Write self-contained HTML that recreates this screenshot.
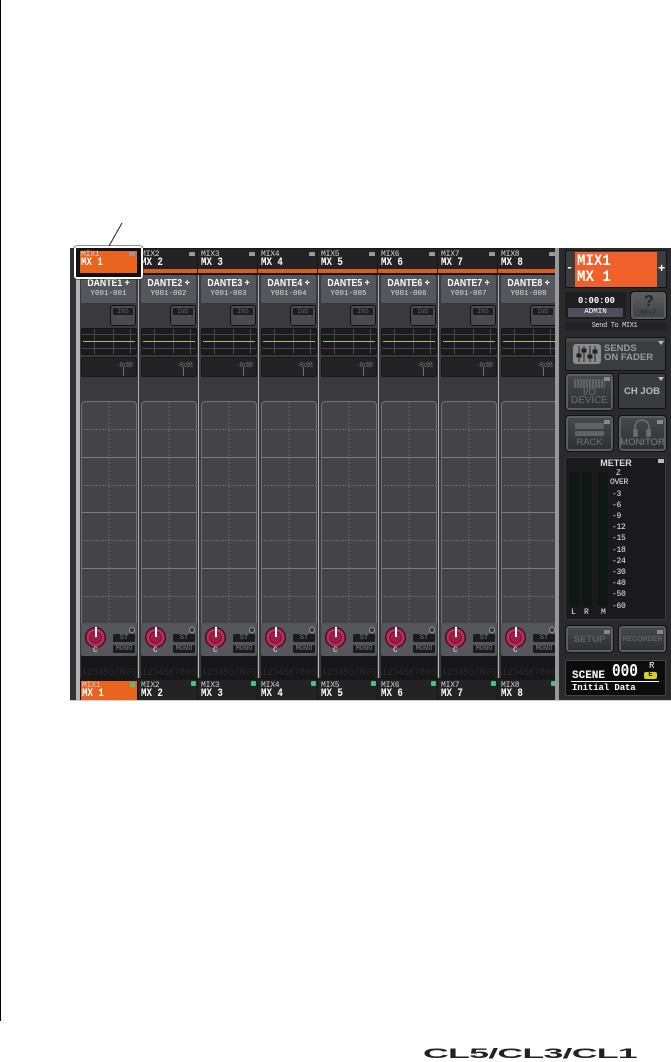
<!DOCTYPE html>
<html><head><meta charset="utf-8">
<style>
html,body{margin:0;padding:0;background:#fff}
body{width:671px;height:1061px;position:relative;overflow:hidden;font-family:"Liberation Sans",sans-serif}
div,span{position:absolute;box-sizing:border-box;white-space:nowrap}
.m{font-family:"Liberation Mono",monospace}
.s{top:0;left:0;width:60px;height:1061px}
.h{left:0;top:249px;width:59px;height:20px;background:#232325}
.o{left:0;top:269px;width:59px;height:4px;background:#d9601f}
.t1{left:3px;top:1px;font:8px/9px "Liberation Mono",monospace;color:#d5d5d5;letter-spacing:-.2px}
.t2{left:3px;top:8px;font:bold 11px/12px "Liberation Mono",monospace;color:#fff;transform-origin:0 0;transform:scaleX(.83)}
.w{left:51px;top:3px;width:6px;height:4px;background:#999;border-radius:1px 1px 0 0}
.sep{left:60px;top:275px;width:1px;height:403px;background:#b0b0b2}
.n{left:3px;top:275px;width:55px;height:28px;background:#55575c;border-radius:2px 2px 0 0;color:#fff;text-align:center}
.n1{left:0;width:55px;top:3px;font:bold 10px/11px "Liberation Sans",sans-serif;transform:scaleX(.87)}
.n2{left:0;width:55px;top:14px;font:7.5px/10px "Liberation Mono",monospace;color:#ddd}
.i{left:32px;top:305px;width:26px;height:21px;background:#4a4b4e;border:1px solid #111113;border-radius:3px}
.i span{left:2px;top:2px;width:20px;height:7px;background:#1e1e20;font:6.5px/7px "Liberation Mono",monospace;color:#666;text-align:center}
.e{left:3px;top:328px;width:56px;height:27px;border:1px solid #17171a;background:#1b1b1d;border-radius:2px}
.e i{position:absolute;left:0;width:54px;height:1px;background:#48484c}
.e u{position:absolute;top:0;width:1px;height:25px;background:#48484c}
.e b{position:absolute;left:1px;top:12px;width:52px;height:1px;background:#8fcf57}
.d{left:3px;top:357px;width:56px;height:20px;background:#232325;border:1px solid #17171a;border-radius:2px;color:#707072;font:7.5px/9px "Liberation Sans",sans-serif}
.d span{right:3px;top:2px}
.d i{position:absolute;left:41px;top:9px;width:1px;height:9px;background:#707072}
.g{left:3px;top:401px;width:56px;height:223px;background:#444448;border:1px solid #737377;border-bottom:0;border-radius:4px 4px 0 0}
.g svg{position:absolute;left:-1px;top:-1px}
.k{left:3px;top:623px;width:56px;height:33px;background:#55575c;border-radius:0 0 3px 3px}
.kn{left:4px;top:4px;width:21px;height:21px;border-radius:50%;background:radial-gradient(circle,#9c1f45 0 5px,#6d1530 5.5px 6px,#c42a58 6.5px 8.5px,#2a0a14 10px)}
.kn i{position:absolute;left:9.5px;top:0;width:2px;height:10px;background:#fff}
.c{left:12px;top:23px;font:8px/9px "Liberation Mono",monospace;color:#eee}
.st{left:32px;width:22px;height:8px;background:#1c1c1e;font:7px/8px "Liberation Mono",monospace;color:#7c7c7e;text-align:center;border-radius:1px}
.led{left:48px;top:4px;width:6px;height:6px;border-radius:50%;background:#333;border:1px solid #999}
.b{left:3px;top:656px;width:56px;height:22px;background:#17171a;font:9px/10px "Liberation Sans",sans-serif;color:#2b2b2d;text-align:center;letter-spacing:.4px}
.b span{left:1px;top:11px}
.f{left:0;top:680px;width:59px;height:20px;background:#232325}
.f .t1{left:3px;top:1px}
.f .t2{left:3px;top:8px}
.l{left:53px;top:1px;width:5px;height:5px;background:#4fbf7a;border-radius:1px}
.p{background:#3b3c3e;border:1px solid #121214;border-radius:2px}
.hw{background:linear-gradient(#47484a,#2f3032);border:2px solid #5c5d5f;outline:1px solid #111;border-radius:3px;color:#6a6b6d;text-align:center}
.mk{font:8px/9px "Liberation Mono",monospace;color:#eee;letter-spacing:-.3px}
</style></head><body>
<div style="left:0;top:0;width:1px;height:1021px;background:#000"></div>
<svg style="position:absolute;left:0;top:0" width="671" height="300"><line x1="122" y1="223" x2="109" y2="246" stroke="#222" stroke-width="1"/></svg>

<div style="left:70px;top:248px;width:601px;height:453px;background:#3a3a3e"></div>
<div style="left:70px;top:248px;width:6px;height:453px;background:#333336"></div>
<div style="left:76px;top:248px;width:4px;height:453px;background:#b4b2b6"></div>
<div style="left:80px;top:248px;width:478px;height:27px;background:#19191b"></div>
<div style="left:80px;top:678px;width:478px;height:23px;background:#19191b"></div>

<div class="s" style="left:78px"><div class="h"></div><div class="o"></div><div class="sep"></div>
<div class="n"><span class="n1">DANTE1 +</span><span class="n2">Y001-001</span></div><div class="i"><span>INS</span></div>
<div class="e"><i style="top:5px"></i><i style="top:19px"></i><u style="left:12px"></u><u style="left:31px"></u><u style="left:48px"></u><b></b></div><div class="d"><span>-8dB</span><i></i></div>
<div class="g"><svg width="56" height="223"><use href="#gr"/></svg></div>
<div class="k"><div class="kn"><i></i></div><span class="c">C</span><span class="st" style="top:11px">ST</span><span class="st" style="top:22px">MONO</span><span class="led"></span></div>
<div class="b"><span>123456789S</span></div>
<div class="f" style="left:3px;top:681px;width:56px;height:19px;background:#e8641f"><span class="t1" style="left:1px;top:0">MIX1</span><span class="t2" style="left:1px;top:7px">MX 1</span><span class="l" style="left:49px;top:1px"></span></div></div>

<div class="s" style="left:138px"><div class="h"><span class="t1">MIX2</span><span class="t2">MX 2</span><span class="w"></span></div><div class="o"></div><div class="sep"></div>
<div class="n"><span class="n1">DANTE2 +</span><span class="n2">Y001-002</span></div><div class="i"><span>INS</span></div>
<div class="e"><i style="top:5px"></i><i style="top:19px"></i><u style="left:12px"></u><u style="left:31px"></u><u style="left:48px"></u><b></b></div><div class="d"><span>-8dB</span><i></i></div>
<div class="g"><svg width="56" height="223"><use href="#gr"/></svg></div>
<div class="k"><div class="kn"><i></i></div><span class="c">C</span><span class="st" style="top:11px">ST</span><span class="st" style="top:22px">MONO</span><span class="led"></span></div>
<div class="b"><span>123456789S</span></div>
<div class="f"><span class="t1">MIX2</span><span class="t2">MX 2</span><span class="l"></span></div></div>

<div class="s" style="left:198px"><div class="h"><span class="t1">MIX3</span><span class="t2">MX 3</span><span class="w"></span></div><div class="o"></div><div class="sep"></div>
<div class="n"><span class="n1">DANTE3 +</span><span class="n2">Y001-003</span></div><div class="i"><span>INS</span></div>
<div class="e"><i style="top:5px"></i><i style="top:19px"></i><u style="left:12px"></u><u style="left:31px"></u><u style="left:48px"></u><b></b></div><div class="d"><span>-8dB</span><i></i></div>
<div class="g"><svg width="56" height="223"><use href="#gr"/></svg></div>
<div class="k"><div class="kn"><i></i></div><span class="c">C</span><span class="st" style="top:11px">ST</span><span class="st" style="top:22px">MONO</span><span class="led"></span></div>
<div class="b"><span>123456789S</span></div>
<div class="f"><span class="t1">MIX3</span><span class="t2">MX 3</span><span class="l"></span></div></div>

<div class="s" style="left:258px"><div class="h"><span class="t1">MIX4</span><span class="t2">MX 4</span><span class="w"></span></div><div class="o"></div><div class="sep"></div>
<div class="n"><span class="n1">DANTE4 +</span><span class="n2">Y001-004</span></div><div class="i"><span>INS</span></div>
<div class="e"><i style="top:5px"></i><i style="top:19px"></i><u style="left:12px"></u><u style="left:31px"></u><u style="left:48px"></u><b></b></div><div class="d"><span>-8dB</span><i></i></div>
<div class="g"><svg width="56" height="223"><use href="#gr"/></svg></div>
<div class="k"><div class="kn"><i></i></div><span class="c">C</span><span class="st" style="top:11px">ST</span><span class="st" style="top:22px">MONO</span><span class="led"></span></div>
<div class="b"><span>123456789S</span></div>
<div class="f"><span class="t1">MIX4</span><span class="t2">MX 4</span><span class="l"></span></div></div>

<div class="s" style="left:318px"><div class="h"><span class="t1">MIX5</span><span class="t2">MX 5</span><span class="w"></span></div><div class="o"></div><div class="sep"></div>
<div class="n"><span class="n1">DANTE5 +</span><span class="n2">Y001-005</span></div><div class="i"><span>INS</span></div>
<div class="e"><i style="top:5px"></i><i style="top:19px"></i><u style="left:12px"></u><u style="left:31px"></u><u style="left:48px"></u><b></b></div><div class="d"><span>-8dB</span><i></i></div>
<div class="g"><svg width="56" height="223"><use href="#gr"/></svg></div>
<div class="k"><div class="kn"><i></i></div><span class="c">C</span><span class="st" style="top:11px">ST</span><span class="st" style="top:22px">MONO</span><span class="led"></span></div>
<div class="b"><span>123456789S</span></div>
<div class="f"><span class="t1">MIX5</span><span class="t2">MX 5</span><span class="l"></span></div></div>

<div class="s" style="left:378px"><div class="h"><span class="t1">MIX6</span><span class="t2">MX 6</span><span class="w"></span></div><div class="o"></div><div class="sep"></div>
<div class="n"><span class="n1">DANTE6 +</span><span class="n2">Y001-006</span></div><div class="i"><span>INS</span></div>
<div class="e"><i style="top:5px"></i><i style="top:19px"></i><u style="left:12px"></u><u style="left:31px"></u><u style="left:48px"></u><b></b></div><div class="d"><span>-8dB</span><i></i></div>
<div class="g"><svg width="56" height="223"><use href="#gr"/></svg></div>
<div class="k"><div class="kn"><i></i></div><span class="c">C</span><span class="st" style="top:11px">ST</span><span class="st" style="top:22px">MONO</span><span class="led"></span></div>
<div class="b"><span>123456789S</span></div>
<div class="f"><span class="t1">MIX6</span><span class="t2">MX 6</span><span class="l"></span></div></div>

<div class="s" style="left:438px"><div class="h"><span class="t1">MIX7</span><span class="t2">MX 7</span><span class="w"></span></div><div class="o"></div><div class="sep"></div>
<div class="n"><span class="n1">DANTE7 +</span><span class="n2">Y001-007</span></div><div class="i"><span>INS</span></div>
<div class="e"><i style="top:5px"></i><i style="top:19px"></i><u style="left:12px"></u><u style="left:31px"></u><u style="left:48px"></u><b></b></div><div class="d"><span>-8dB</span><i></i></div>
<div class="g"><svg width="56" height="223"><use href="#gr"/></svg></div>
<div class="k"><div class="kn"><i></i></div><span class="c">C</span><span class="st" style="top:11px">ST</span><span class="st" style="top:22px">MONO</span><span class="led"></span></div>
<div class="b"><span>123456789S</span></div>
<div class="f"><span class="t1">MIX7</span><span class="t2">MX 7</span><span class="l"></span></div></div>

<div class="s" style="left:498px"><div class="h"><span class="t1">MIX8</span><span class="t2">MX 8</span><span class="w"></span></div><div class="o"></div>
<div class="n"><span class="n1">DANTE8 +</span><span class="n2">Y001-008</span></div><div class="i"><span>INS</span></div>
<div class="e"><i style="top:5px"></i><i style="top:19px"></i><u style="left:12px"></u><u style="left:31px"></u><u style="left:48px"></u><b></b></div><div class="d"><span>-8dB</span><i></i></div>
<div class="g"><svg width="56" height="223"><use href="#gr"/></svg></div>
<div class="k"><div class="kn"><i></i></div><span class="c">C</span><span class="st" style="top:11px">ST</span><span class="st" style="top:22px">MONO</span><span class="led"></span></div>
<div class="b"><span>123456789S</span></div>
<div class="f"><span class="t1">MIX8</span><span class="t2">MX 8</span><span class="l"></span></div></div>

<svg width="0" height="0" style="position:absolute"><defs><g id="gr" fill="none" stroke="#68686c">
<line x1="28" y1="1" x2="28" y2="223" stroke-dasharray="2 2"/>
<line x1="0" y1="28.5" x2="56" y2="28.5" stroke-dasharray="2 1"/>
<line x1="0" y1="56.5" x2="56" y2="56.5" stroke="#7e7e82"/>
<line x1="0" y1="84.5" x2="56" y2="84.5" stroke-dasharray="2 1"/>
<line x1="0" y1="111.5" x2="56" y2="111.5" stroke="#7e7e82"/>
<line x1="0" y1="139.5" x2="56" y2="139.5" stroke-dasharray="2 1"/>
<line x1="0" y1="167.5" x2="56" y2="167.5" stroke="#7e7e82"/>
<line x1="0" y1="195.5" x2="56" y2="195.5" stroke-dasharray="2 1"/>
</g></defs></svg>

<!-- selected outline -->
<div style="left:74px;top:246px;width:69px;height:33px;border:1px solid #fff;background:#111;border-radius:3px;box-shadow:0 0 0 .5px #222"></div>
<div style="left:75px;top:247px;width:67px;height:31px;border:1px solid #fff;border-radius:2px;outline:1px solid #111;outline-offset:-2px"></div>
<div style="left:80px;top:251px;width:57px;height:22px;background:#e8641f"></div>
<span class="t1" style="left:81px;top:250px">MIX1</span>
<span class="t2" style="left:81px;top:257px">MX 1</span>
<span class="w" style="left:129px;top:252px"></span>

<!-- right panel -->
<div style="left:555px;top:248px;width:4px;height:453px;background:#98989a"></div>
<div style="left:559px;top:248px;width:112px;height:453px;background:#2a2a2c"></div>

<div class="p" style="left:565px;top:250px;width:102px;height:38px;background:#3b3c3e"></div>
<div style="left:575px;top:252px;width:82px;height:35px;background:#f0602a"></div>
<span class="m" style="left:577px;top:253px;font-weight:bold;font-size:16px;line-height:16px;color:#fff;transform-origin:0 0;transform:scaleX(.88)">MIX1</span>
<span class="m" style="left:577px;top:269px;font-weight:bold;font-size:16px;line-height:16px;color:#fff;transform-origin:0 0;transform:scaleX(.88)">MX 1</span>
<span class="m" style="left:566px;top:262px;font-weight:bold;font-size:12px;line-height:12px;color:#fff">-</span>
<span class="m" style="left:658px;top:263px;font-weight:bold;font-size:12px;line-height:12px;color:#fff">+</span>

<div style="left:565px;top:292px;width:61px;height:27px;background:#1f1f21;border-radius:2px"></div>
<span class="m" style="left:578px;top:296px;font-weight:bold;font-size:8.8px;line-height:11px;color:#fff">0:00:00</span>
<div class="m" style="left:568px;top:308px;width:55px;height:9px;background:#4d5058;font-size:7.5px;line-height:9px;color:#fff;text-align:center">ADMIN</div>
<div class="hw" style="left:631px;top:292px;width:35px;height:27px;background:linear-gradient(#5c5d60,#404145)"><span style="left:11px;top:-1px;font:bold 16px/18px 'Liberation Sans',sans-serif;color:#26272a">?</span><span style="left:0;width:31px;top:15px;font:6.5px/7px 'Liberation Mono',monospace;color:#26272a">HELP</span></div>
<div style="left:565px;top:322px;width:101px;height:9px;background:#232325;border-radius:2px"></div>
<div class="m" style="left:564px;top:322px;width:101px;font-size:7px;line-height:9px;letter-spacing:-.4px;color:#ddd;text-align:center">Send To MIX1</div>

<div class="p" style="left:565px;top:337px;width:101px;height:34px;background:linear-gradient(#48494b 0 3px,#3b3c3e 4px)"></div>
<div style="left:573px;top:344px;width:28px;height:20px;background:#8b8b8c;border-radius:3px"></div>
<svg style="position:absolute;left:573px;top:344px" width="28" height="20" stroke="#222" fill="#222"><line x1="6" y1="2" x2="6" y2="18"/><line x1="11" y1="2" x2="11" y2="18"/><line x1="17" y1="2" x2="17" y2="18"/><line x1="22" y1="2" x2="22" y2="18"/><rect x="4" y="10" width="4" height="3"/><rect x="9" y="5" width="4" height="3"/><rect x="15" y="11" width="4" height="3"/><rect x="20" y="6" width="4" height="3"/></svg>
<span style="left:604px;top:343px;font:bold 9.5px/12px 'Liberation Sans',sans-serif;color:#9a9a9a">SENDS</span>
<span style="left:604px;top:352px;font:bold 9.5px/12px 'Liberation Sans',sans-serif;color:#9a9a9a">ON FADER</span>
<svg style="position:absolute;left:658px;top:341px" width="7" height="5"><path d="M0 0H6L3 4Z" fill="#bbb"/></svg>

<div class="hw" style="left:566px;top:374px;width:47px;height:36px"></div>
<div style="left:574px;top:379px;width:31px;height:9px;background:repeating-linear-gradient(90deg,#626365 0 2px,#48494c 2px 3px)"></div>
<div style="left:566px;top:388px;width:47px;text-align:center;font:10px/9px 'Liberation Sans',sans-serif;color:#6d6e70">I/O</div>
<div style="left:566px;top:396px;width:47px;text-align:center;font:10px/10px 'Liberation Sans',sans-serif;color:#6d6e70">DEVICE</div>
<span style="left:604px;top:377px;width:6px;height:4px;background:#888"></span>

<div class="p" style="left:618px;top:373px;width:48px;height:36px;background:#3a3b3d"></div>
<div style="left:618px;top:386px;width:48px;text-align:center;font:bold 9.5px/12px 'Liberation Sans',sans-serif;color:#bbb">CH JOB</div>
<svg style="position:absolute;left:658px;top:377px" width="7" height="5"><path d="M0 0H6L3 4Z" fill="#bbb"/></svg>

<div class="hw" style="left:566px;top:416px;width:47px;height:35px"></div>
<div style="left:575px;top:423px;width:29px;height:6px;background:#626365;border-radius:1px"></div>
<div style="left:575px;top:431px;width:29px;height:5px;background:#626365;border-radius:1px"></div>
<div style="left:566px;top:437px;width:47px;text-align:center;font:9.5px/11px 'Liberation Sans',sans-serif;color:#6d6e70">RACK</div>
<span style="left:604px;top:420px;width:6px;height:4px;background:#888"></span>

<div class="hw" style="left:619px;top:416px;width:47px;height:35px"></div>
<svg style="position:absolute;left:631px;top:418px" width="22" height="22" fill="none" stroke="#6d6e70" stroke-width="1.6"><path d="M4 14V9a7 7 0 0 1 14 0v5"/><rect x="3" y="12" width="3" height="6" fill="#6d6e70"/><rect x="16" y="12" width="3" height="6" fill="#6d6e70"/></svg>
<div style="left:619px;top:437px;width:47px;text-align:center;font:9.5px/11px 'Liberation Sans',sans-serif;color:#7e7f81">MONITOR</div>
<span style="left:657px;top:420px;width:6px;height:4px;background:#888"></span>

<div style="left:565px;top:457px;width:101px;height:163px;background:#1a1a1c;border:1px solid #38383a;border-radius:2px"></div>
<div style="left:569px;top:472px;width:10px;height:134px;background:#0f1812"></div>
<div style="left:582px;top:472px;width:10px;height:134px;background:#0f1812"></div>
<div style="left:598px;top:472px;width:10px;height:134px;background:#0f1812"></div>
<div style="left:593px;top:458px;width:46px;text-align:center;font:bold 9px/11px 'Liberation Sans',sans-serif;color:#ddd">METER</div>
<span style="left:658px;top:459px;width:6px;height:4px;background:#bbb"></span>
<span class="mk" style="left:616px;top:469px">Z</span>
<span class="mk" style="left:610px;top:478px">OVER</span>
<span class="mk" style="left:612px;top:490px">-3</span>
<span class="mk" style="left:612px;top:501px">-6</span>
<span class="mk" style="left:612px;top:512px">-9</span>
<span class="mk" style="left:612px;top:523px">-12</span>
<span class="mk" style="left:612px;top:534px">-15</span>
<span class="mk" style="left:612px;top:546px">-18</span>
<span class="mk" style="left:612px;top:557px">-24</span>
<span class="mk" style="left:612px;top:568px">-30</span>
<span class="mk" style="left:612px;top:579px">-40</span>
<span class="mk" style="left:612px;top:590px">-50</span>
<span class="mk" style="left:612px;top:602px">-60</span>
<span class="mk" style="left:571px;top:608px">L</span>
<span class="mk" style="left:584px;top:608px">R</span>
<span class="mk" style="left:601px;top:608px">M</span>

<div class="hw" style="left:566px;top:626px;width:47px;height:26px;font:bold 9.5px/24px 'Liberation Sans',sans-serif;color:#5f6062">SETUP</div>
<span style="left:604px;top:630px;width:6px;height:4px;background:#888"></span>
<div class="hw" style="left:619px;top:626px;width:47px;height:26px;font:bold 7px/24px 'Liberation Sans',sans-serif;color:#5f6062">RECORDER</div>
<span style="left:657px;top:630px;width:6px;height:4px;background:#888"></span>

<div style="left:565px;top:660px;width:101px;height:36px;background:#0c0c0d;border:1px solid #454547;border-radius:2px"></div>
<span class="m" style="left:572px;top:671px;font-weight:bold;font-size:11px;line-height:11px;color:#fff">SCENE</span>
<span class="m" style="left:612px;top:663px;font-weight:bold;font-size:18px;line-height:18px;color:#fff;transform-origin:0 0;transform:scaleX(.8)">000</span>
<span class="m" style="left:649px;top:661px;font-size:9px;line-height:10px;color:#fff">R</span>
<div class="m" style="left:644px;top:672px;width:13px;height:7px;background:#d8d020;border-radius:2px;font-size:7.5px;line-height:7px;font-weight:bold;color:#222;text-align:center">E</div>
<div style="left:571px;top:681px;width:88px;height:1px;background:#fff"></div>
<span class="m" style="left:572px;top:683px;font-weight:bold;font-size:9px;line-height:11px;color:#fff;letter-spacing:-.1px">Initial Data</span>

<div style="left:70px;top:700px;width:601px;height:1px;background:#c8d0d8"></div>

<!-- logo -->
<span style="left:423px;top:1046px;font:bold 13.5px/16px 'Liberation Sans',sans-serif;color:#222;transform-origin:0 0;transform:scaleX(2.65);letter-spacing:-.3px">CL5/CL3/CL1</span>
</body></html>
